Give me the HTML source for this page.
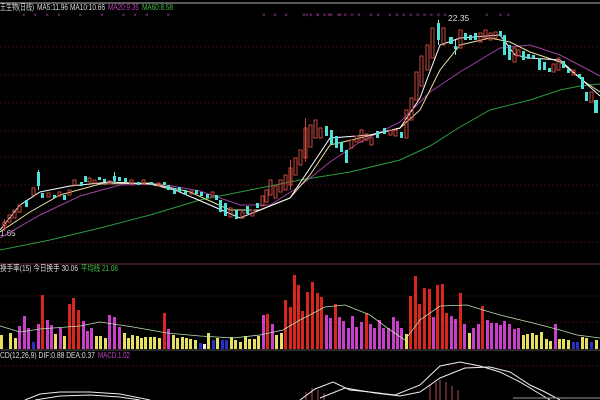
<!DOCTYPE html>
<html><head><meta charset="utf-8"><style>
html,body{margin:0;padding:0;background:#000;width:600px;height:400px;overflow:hidden}
svg{display:block}
.c{fill:#4fe0d8}.r{fill:none;stroke:#c8483e;stroke-width:1}
.w{stroke:#7fe6df}.wr{stroke:#c8483e}
text{font-family:"Liberation Sans","Noto Sans CJK SC",sans-serif;font-size:8.5px}
.R{fill:#d8261e}.M{fill:#c840c8}.Y{fill:#e6e060}.B{fill:#2630c8}.W{fill:#eee}
</style></head><body>
<svg width="600" height="400" viewBox="0 0 600 400" xmlns="http://www.w3.org/2000/svg">
<rect width="600" height="400" fill="#000"/>
<line x1="0" y1="3" x2="600" y2="3" stroke="#777" stroke-width="1.5"/>
<g stroke="#3a0c0c" stroke-width="1" stroke-dasharray="2,2">
<line x1="0" y1="47" x2="600" y2="47"/><line x1="0" y1="75" x2="600" y2="75"/>
<line x1="0" y1="103" x2="600" y2="103"/><line x1="0" y1="131" x2="600" y2="131"/>
<line x1="0" y1="157" x2="600" y2="157"/><line x1="0" y1="185" x2="600" y2="185"/>
<line x1="0" y1="213" x2="600" y2="213"/><line x1="0" y1="242" x2="600" y2="242"/>
<line x1="0" y1="296" x2="600" y2="296"/><line x1="0" y1="322" x2="600" y2="322"/>
<line x1="0" y1="366" x2="600" y2="366"/>
</g>
<line x1="0" y1="264" x2="600" y2="264" stroke="#6a3030" stroke-width="1"/>
<line x1="0" y1="350" x2="600" y2="350" stroke="#555" stroke-width="1"/>
<text x="0" y="10" fill="#ddd" textLength="34" lengthAdjust="spacingAndGlyphs">王生物(日线)</text>
<text x="37" y="10" fill="#ddd" textLength="31" lengthAdjust="spacingAndGlyphs">MA5:11.96</text>
<text x="70" y="10" fill="#ddd" textLength="35" lengthAdjust="spacingAndGlyphs">MA10:10.66</text>
<text x="108" y="10" fill="#c040c0" textLength="31" lengthAdjust="spacingAndGlyphs">MA20:9.35</text>
<text x="142" y="10" fill="#40c040" textLength="31" lengthAdjust="spacingAndGlyphs">MA60:8.58</text>
<g fill="#b040b0">
<text x="22" y="17" style="font-size:6px" textLength="148" lengthAdjust="spacing">×××× ×  ×  ×××  ×</text>
<text x="262" y="17" style="font-size:6px" textLength="80" lengthAdjust="spacing">×××    ××××</text>
<text x="302" y="17" style="font-size:6px" textLength="145" lengthAdjust="spacing">××××××××× ××  ×××××××××</text>
<text x="485" y="17" style="font-size:6px" textLength="25" lengthAdjust="spacing">× ××</text></g>
<text x="448" y="21" fill="#ddd">22.35</text>
<text x="0" y="236" fill="#ddd" style="font-size:8px">1.65</text>
<polyline fill="none" stroke="#2a9a40" stroke-width="1" points="0,250 50,240 100,228 150,215 200,200 250,190 300,180 350,172 400,160 430,146 460,127 490,110 530,100 560,90 580,86 600,84"/>
<polyline fill="none" stroke="#a040a0" stroke-width="1" points="0,238 40,215 80,196 120,185 160,184 200,191 240,205 270,205 300,186 330,162 360,142 400,122 430,92 460,72 500,48 530,45 560,55 585,68 600,76"/>
<polyline fill="none" stroke="#e8e0a0" stroke-width="1" points="0,232 30,212 60,195 100,184 150,183 190,192 230,210 260,210 290,198 310,175 330,145 360,138 400,128 420,110 440,70 460,45 490,38 510,42 530,52 560,62 585,82 600,92"/>
<polyline fill="none" stroke="#fff" stroke-width="1" points="0,230 20,205 40,192 70,186 110,182 150,184 175,190 210,205 240,218 260,210 290,198 310,168 330,138 370,135 400,128 420,98 440,45 460,38 500,35 515,55 530,58 560,60 580,78 600,96"/>
<g stroke-width="1">
<line class="wr" x1="4.5" y1="219" x2="4.5" y2="231"/><rect class="r" x="3" y="222" width="3" height="6"/>
<rect class="r" x="8" y="215" width="3" height="7"/><rect class="r" x="13" y="210" width="3" height="8"/>
<rect class="r" x="18" y="205" width="3" height="7"/><rect class="c" x="25" y="200" width="3" height="7"/>
<rect class="r" x="32" y="188" width="3" height="7"/><line class="w" x1="38.5" y1="170" x2="38.5" y2="190"/><rect class="c" x="37" y="172" width="3" height="14"/>
<rect class="c" x="41" y="193" width="3" height="5"/><rect class="r" x="47" y="193" width="3" height="4"/>
<rect class="c" x="53" y="195" width="3" height="3"/><rect class="r" x="58" y="192" width="3" height="4"/>
<rect class="c" x="63" y="195" width="3" height="5"/><rect class="r" x="68" y="190" width="3" height="5"/>
<rect class="r" x="73" y="180" width="3" height="5"/><rect class="c" x="80" y="182" width="3" height="4"/>
<rect class="c" x="84" y="176" width="3" height="6"/><rect class="r" x="88" y="178" width="3" height="4"/>
<rect class="r" x="93" y="180" width="3" height="3"/><rect class="c" x="98" y="177" width="3" height="3"/>
<rect class="c" x="103" y="179" width="3" height="3"/><rect class="r" x="108" y="181" width="3" height="3"/>
<line class="w" x1="114.5" y1="172" x2="114.5" y2="184"/><rect class="c" x="113" y="176" width="3" height="5"/>
<rect class="c" x="118" y="177" width="3" height="4"/><rect class="c" x="124" y="178" width="3" height="4"/>
<rect class="r" x="130" y="180" width="3" height="4"/><rect class="c" x="137" y="182" width="3" height="3"/>
<rect class="r" x="142" y="180" width="3" height="4"/><rect class="c" x="150" y="182" width="3" height="3"/>
<rect class="r" x="157" y="183" width="3" height="3"/><rect class="c" x="163" y="182" width="3" height="3"/>
<rect class="c" x="167" y="185" width="3" height="5"/><rect class="c" x="173" y="188" width="3" height="6"/>
<rect class="c" x="178" y="187" width="3" height="5"/><rect class="c" x="184" y="190" width="3" height="5"/>
<rect class="r" x="190" y="191" width="3" height="3"/><rect class="c" x="195" y="190" width="3" height="4"/>
<rect class="c" x="200" y="192" width="3" height="4"/><rect class="c" x="206" y="194" width="3" height="4"/>
<rect class="r" x="211" y="192" width="3" height="5"/><rect class="c" x="215" y="195" width="3" height="5"/>
<rect class="c" x="219" y="200" width="3" height="12"/><rect class="c" x="224" y="203" width="3" height="13"/>
<rect class="r" x="229" y="208" width="3" height="9"/><rect class="c" x="235" y="210" width="3" height="9"/>
<rect class="r" x="241" y="212" width="3" height="6"/><rect class="c" x="246" y="206" width="3" height="8"/>
<rect class="r" x="251" y="210" width="3" height="6"/><rect class="c" x="256" y="203" width="3" height="5"/>
<rect class="r" x="261" y="196" width="3" height="10"/><rect class="r" x="265" y="190" width="3" height="12"/>
<rect class="r" x="269" y="180" width="3" height="15"/><rect class="r" x="274" y="186" width="3" height="12"/>
<rect class="r" x="279" y="180" width="3" height="12"/><rect class="r" x="284" y="175" width="3" height="15"/>
<line class="wr" x1="290.5" y1="160" x2="290.5" y2="190"/><rect class="r" x="289" y="168" width="3" height="17"/>
<rect class="r" x="294" y="158" width="3" height="17"/><rect class="r" x="299" y="150" width="3" height="15"/>
<line class="wr" x1="305.5" y1="118" x2="305.5" y2="162"/><rect class="r" x="304" y="128" width="3" height="30"/>
<rect class="r" x="309" y="125" width="3" height="22"/><rect class="r" x="314" y="120" width="3" height="18"/>
<rect class="r" x="319" y="128" width="3" height="10"/><rect class="c" x="325" y="126" width="3" height="10"/>
<rect class="c" x="330" y="130" width="3" height="14"/><rect class="c" x="335" y="136" width="3" height="12"/>
<rect class="c" x="340" y="142" width="3" height="10"/><rect class="c" x="345" y="150" width="3" height="13"/>
<rect class="r" x="350" y="140" width="3" height="8"/><rect class="r" x="355" y="136" width="3" height="6"/>
<rect class="r" x="360" y="130" width="3" height="12"/><rect class="r" x="365" y="134" width="3" height="6"/>
<rect class="r" x="370" y="138" width="3" height="7"/><rect class="c" x="376" y="131" width="3" height="7"/>
<rect class="c" x="383" y="128" width="3" height="6"/><rect class="r" x="389" y="130" width="3" height="5"/>
<rect class="r" x="394" y="130" width="3" height="6"/><rect class="c" x="400" y="132" width="3" height="6"/>
<rect class="r" x="405" y="110" width="3" height="28"/><rect class="r" x="410" y="98" width="3" height="22"/>
<rect class="r" x="415" y="72" width="3" height="28"/><rect class="r" x="420" y="56" width="3" height="30"/>
<rect class="r" x="426" y="45" width="3" height="25"/><rect class="r" x="431" y="28" width="3" height="30"/>
<line class="w" x1="438.5" y1="20" x2="438.5" y2="45"/><rect class="c" x="437" y="23" width="3" height="17"/>
<rect class="r" x="442" y="28" width="3" height="17"/><rect class="c" x="449" y="37" width="4" height="7"/>
<line class="w" x1="455.5" y1="40" x2="455.5" y2="55"/><rect class="c" x="454" y="46" width="3" height="3"/>
<rect class="r" x="459" y="30" width="3" height="18"/><rect class="c" x="464" y="33" width="3" height="7"/>
<rect class="c" x="469" y="35" width="3" height="5"/><rect class="c" x="474" y="33" width="3" height="7"/>
<rect class="r" x="479" y="33" width="3" height="9"/><rect class="r" x="484" y="30" width="3" height="8"/>
<rect class="r" x="489" y="33" width="3" height="7"/><rect class="r" x="494" y="32" width="3" height="6"/>
<rect class="c" x="499" y="31" width="3" height="5"/><rect class="c" x="503" y="35" width="3" height="20"/>
<rect class="c" x="508" y="45" width="3" height="15"/><rect class="r" x="513" y="48" width="3" height="14"/>
<rect class="r" x="517" y="50" width="3" height="6"/><rect class="c" x="522" y="51" width="3" height="9"/>
<rect class="c" x="527" y="54" width="3" height="5"/><rect class="c" x="532" y="55" width="3" height="3"/>
<rect class="c" x="538" y="58" width="3" height="12"/><rect class="c" x="543" y="62" width="3" height="8"/>
<rect class="c" x="548" y="68" width="3" height="4"/><rect class="r" x="552" y="64" width="3" height="8"/>
<rect class="r" x="557" y="58" width="3" height="12"/><rect class="c" x="562" y="61" width="3" height="7"/>
<rect class="c" x="567" y="69" width="3" height="4"/><rect class="r" x="572" y="70" width="3" height="5"/>
<rect class="c" x="578" y="74" width="3" height="4"/><rect class="c" x="581" y="77" width="3" height="12"/>
<rect class="c" x="585" y="92" width="3" height="9"/><rect class="r" x="590" y="92" width="3" height="10"/>
<rect class="c" x="594" y="100" width="4" height="13"/>
</g>
<text x="0" y="271" fill="#ddd" textLength="78" lengthAdjust="spacingAndGlyphs">换手率(15) 今日换手 30.06</text>
<text x="81" y="271" fill="#40c040" textLength="37" lengthAdjust="spacingAndGlyphs">平均线 21.06</text>
<g>
<rect class="Y" x="0" y="335" width="3" height="14"/><rect class="Y" x="9" y="333" width="3" height="16"/>
<rect class="Y" x="14" y="338" width="3" height="11"/><rect class="M" x="18" y="326" width="3" height="23"/>
<rect class="M" x="23" y="316" width="3" height="33"/><rect class="M" x="27" y="328" width="3" height="21"/>
<rect class="B" x="32" y="342" width="3" height="7"/><rect class="M" x="37" y="324" width="3" height="25"/>
<rect class="R" x="41" y="295" width="3" height="54"/><rect class="M" x="46" y="320" width="3" height="29"/>
<rect class="M" x="50" y="325" width="3" height="24"/><rect class="Y" x="54" y="334" width="3" height="15"/>
<rect class="M" x="59" y="328" width="3" height="21"/><rect class="Y" x="63" y="336" width="3" height="13"/>
<rect class="R" x="68" y="304" width="3" height="45"/><rect class="R" x="72" y="298" width="3" height="51"/>
<rect class="R" x="77" y="310" width="3" height="39"/><rect class="M" x="82" y="321" width="3" height="28"/>
<rect class="M" x="86" y="331" width="3" height="18"/><rect class="M" x="90" y="328" width="3" height="21"/>
<rect class="Y" x="95" y="336" width="3" height="13"/><rect class="Y" x="99" y="336" width="3" height="13"/>
<rect class="Y" x="104" y="338" width="3" height="11"/><rect class="M" x="108" y="315" width="3" height="34"/>
<rect class="M" x="113" y="317" width="3" height="32"/><rect class="M" x="118" y="327" width="3" height="22"/>
<rect class="Y" x="123" y="333" width="3" height="16"/><rect class="Y" x="127" y="338" width="3" height="11"/>
<rect class="Y" x="131" y="335" width="3" height="14"/><rect class="Y" x="136" y="336" width="3" height="13"/>
<rect class="Y" x="140" y="338" width="3" height="11"/><rect class="Y" x="144" y="337" width="3" height="12"/>
<rect class="Y" x="149" y="337" width="3" height="12"/><rect class="Y" x="153" y="337" width="3" height="12"/>
<rect class="Y" x="158" y="338" width="3" height="11"/><rect class="R" x="163" y="313" width="3" height="36"/>
<rect class="M" x="167" y="329" width="3" height="20"/><rect class="Y" x="172" y="335" width="3" height="14"/>
<rect class="Y" x="176" y="338" width="3" height="11"/><rect class="Y" x="181" y="337" width="3" height="12"/>
<rect class="Y" x="185" y="338" width="3" height="11"/><rect class="Y" x="189" y="339" width="3" height="10"/>
<rect class="Y" x="194" y="340" width="3" height="9"/><rect class="B" x="199" y="343" width="3" height="6"/>
<rect class="W" x="203" y="344" width="3" height="5"/><rect class="Y" x="207" y="333" width="3" height="16"/>
<rect class="B" x="212" y="340" width="3" height="9"/><rect class="Y" x="216" y="338" width="3" height="11"/>
<rect class="B" x="221" y="340" width="3" height="9"/><rect class="B" x="225" y="340" width="3" height="9"/>
<rect class="Y" x="230" y="337" width="3" height="12"/><rect class="Y" x="234" y="340" width="3" height="9"/>
<rect class="Y" x="239" y="342" width="3" height="7"/><rect class="Y" x="244" y="336" width="3" height="13"/>
<rect class="Y" x="248" y="339" width="3" height="10"/><rect class="Y" x="253" y="339" width="3" height="10"/>
<rect class="Y" x="257" y="336" width="3" height="13"/><rect class="M" x="262" y="315" width="3" height="34"/>
<rect class="R" x="266" y="314" width="3" height="35"/><rect class="M" x="271" y="324" width="3" height="25"/>
<rect class="Y" x="275" y="335" width="3" height="14"/><rect class="Y" x="280" y="333" width="3" height="16"/>
<rect class="R" x="284" y="300" width="3" height="49"/><rect class="R" x="289" y="307" width="3" height="42"/>
<rect class="R" x="293" y="275" width="3" height="74"/><rect class="R" x="297" y="285" width="3" height="64"/>
<rect class="R" x="301" y="311" width="3" height="38"/><rect class="R" x="306" y="292" width="3" height="57"/>
<rect class="R" x="311" y="282" width="3" height="67"/><rect class="R" x="316" y="293" width="3" height="56"/>
<rect class="R" x="320" y="297" width="3" height="52"/><rect class="M" x="325" y="315" width="3" height="34"/>
<rect class="M" x="329" y="318" width="3" height="31"/><rect class="R" x="334" y="304" width="3" height="45"/>
<rect class="M" x="338" y="317" width="3" height="32"/><rect class="M" x="342" y="321" width="3" height="28"/>
<rect class="M" x="347" y="328" width="3" height="21"/><rect class="M" x="351" y="316" width="3" height="33"/>
<rect class="M" x="355" y="327" width="3" height="22"/><rect class="M" x="360" y="322" width="3" height="27"/>
<rect class="R" x="365" y="313" width="3" height="36"/><rect class="M" x="369" y="324" width="3" height="25"/>
<rect class="M" x="373" y="328" width="3" height="21"/><rect class="M" x="378" y="320" width="3" height="29"/>
<rect class="M" x="382" y="328" width="3" height="21"/><rect class="M" x="387" y="328" width="3" height="21"/>
<rect class="M" x="392" y="317" width="3" height="32"/><rect class="M" x="396" y="321" width="3" height="28"/>
<rect class="M" x="400" y="328" width="3" height="21"/><rect class="Y" x="405" y="334" width="3" height="15"/>
<rect class="R" x="409" y="296" width="3" height="53"/><rect class="R" x="414" y="276" width="3" height="73"/>
<rect class="R" x="418" y="304" width="3" height="45"/><rect class="R" x="423" y="288" width="3" height="61"/>
<rect class="R" x="428" y="289" width="3" height="60"/><rect class="M" x="432" y="317" width="3" height="32"/>
<rect class="R" x="436" y="285" width="3" height="64"/><rect class="R" x="441" y="284" width="3" height="65"/>
<rect class="R" x="445" y="313" width="3" height="36"/><rect class="M" x="450" y="316" width="3" height="33"/>
<rect class="M" x="454" y="319" width="3" height="30"/><rect class="R" x="459" y="293" width="3" height="56"/>
<rect class="M" x="463" y="324" width="3" height="25"/><rect class="Y" x="468" y="333" width="3" height="16"/>
<rect class="M" x="472" y="328" width="3" height="21"/><rect class="M" x="477" y="324" width="3" height="25"/>
<rect class="R" x="481" y="306" width="3" height="43"/><rect class="M" x="486" y="320" width="3" height="29"/>
<rect class="M" x="490" y="323" width="3" height="26"/><rect class="M" x="495" y="323" width="3" height="26"/>
<rect class="M" x="499" y="325" width="3" height="24"/><rect class="M" x="503" y="321" width="3" height="28"/>
<rect class="M" x="508" y="324" width="3" height="25"/><rect class="M" x="513" y="329" width="3" height="20"/>
<rect class="M" x="517" y="328" width="3" height="21"/><rect class="Y" x="522" y="335" width="3" height="14"/>
<rect class="Y" x="526" y="334" width="3" height="15"/><rect class="Y" x="531" y="333" width="3" height="16"/>
<rect class="Y" x="535" y="335" width="3" height="14"/><rect class="Y" x="540" y="332" width="3" height="17"/>
<rect class="Y" x="545" y="339" width="3" height="10"/><rect class="Y" x="549" y="341" width="3" height="8"/>
<rect class="M" x="554" y="324" width="3" height="25"/><rect class="Y" x="558" y="339" width="3" height="10"/>
<rect class="Y" x="562" y="339" width="3" height="10"/><rect class="Y" x="567" y="340" width="3" height="9"/>
<rect class="B" x="572" y="342" width="3" height="7"/><rect class="B" x="576" y="342" width="3" height="7"/>
<rect class="Y" x="581" y="337" width="3" height="12"/><rect class="Y" x="585" y="338" width="3" height="11"/>
<rect class="B" x="590" y="342" width="3" height="7"/><rect class="Y" x="595" y="340" width="3" height="9"/>
</g>
<polyline fill="none" stroke="#b8e0b0" stroke-width="0.8" points="0,326 20,332 40,329 80,326 100,322 133,327 167,333 200,336 233,338 260,335 283,330 300,320 325,307 345,305 370,315 390,330 405,340 420,320 440,306 467,305 483,310 500,315 533,323 560,330 577,335 600,338"/>
<text x="0" y="358" fill="#ddd" textLength="95" lengthAdjust="spacingAndGlyphs">CD(12,26,9) DIF:0.88 DEA:0.37</text>
<text x="98" y="358" fill="#c040c0" textLength="32" lengthAdjust="spacingAndGlyphs">MACD:1.02</text>
<g stroke="#b05050" stroke-width="1">
<line x1="306" y1="392" x2="306" y2="400"/><line x1="312" y1="388" x2="312" y2="400"/><line x1="318" y1="390" x2="318" y2="400"/><line x1="324" y1="393" x2="324" y2="400"/>
<line x1="430" y1="385" x2="430" y2="400"/><line x1="436" y1="382" x2="436" y2="400"/><line x1="440" y1="380" x2="440" y2="400"/><line x1="446" y1="382" x2="446" y2="400"/><line x1="452" y1="386" x2="452" y2="400"/><line x1="458" y1="390" x2="458" y2="400"/>
</g>
<polyline fill="none" stroke="#eee" stroke-width="1" points="25,400 40,394 60,392 90,392 120,394 150,400"/>
<polyline fill="none" stroke="#eee" stroke-width="1" points="35,400 60,396 90,395 120,397 140,400"/>
<polyline fill="none" stroke="#eee" stroke-width="1" points="300,400 315,389 333,382 350,390 370,392 395,395 420,385 440,366 460,362 480,366 500,372 520,382 540,394 550,400"/>
<polyline fill="none" stroke="#eee" stroke-width="1" points="320,398 345,388 375,393 400,396 420,392 440,378 465,368 490,367 510,372 530,385 545,392 560,400"/>
<line x1="513" y1="398" x2="600" y2="398" stroke="#999" stroke-width="1"/>
</svg>
</body></html>
